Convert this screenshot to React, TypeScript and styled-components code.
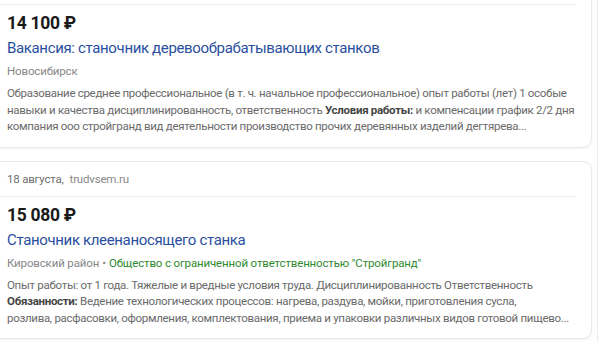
import styled, { createGlobalStyle } from 'styled-components';

const GlobalStyle = createGlobalStyle`
  html, body {
    margin: 0;
    padding: 0;
    background: #fff;
    overflow: hidden;
  }
  body {
    font-family: Roboto, "Liberation Sans", Arial, sans-serif;
  }
`;

const Page = styled.div`
  width: 600px;
  height: 342px;
  overflow: hidden;
  display: flex;
`;

const List = styled.div`
  width: 602px;
  flex-shrink: 0;
  margin-left: -10px;
  margin-top: -31px;
  display: flex;
  flex-direction: column;
  gap: 13px;
`;

const NextColumnEdge = styled.div`
  flex-shrink: 0;
  width: 2px;
  margin-left: 5px;
  border-left: 1px solid #ececec;
`;

const Card = styled.div`
  border: 1px solid #e9e9e9;
  border-radius: 9px;
  box-shadow: 0 1px 3px rgba(0, 0, 0, 0.05);
  padding: 0 16px 12px 16px;
  background: #fff;
`;

const Header = styled.div`
  height: 34px;
  display: flex;
  align-items: center;
  font-size: 11.5px;
  letter-spacing: -0.2px;
  color: #6f6f6f;
  border-bottom: 1px solid #ececec;
  margin-left: -16px;
  padding-left: 16px;
`;

const Source = styled.span`
  margin-left: 6px;
  color: #888;
`;

const Price = styled.div`
  margin-top: 6px;
  font-size: 17.5px;
  font-weight: 700;
  letter-spacing: -0.3px;
  color: #1a1a1a;
  line-height: 24px;
`;

const Title = styled.div`
  font-size: 15px;
  letter-spacing: -0.35px;
  color: #2a4f9e;
  line-height: 20px;
  margin-top: 3px;
`;

const Meta = styled.div`
  font-size: 11.5px;
  letter-spacing: -0.15px;
  color: #888;
  line-height: 16px;
  margin-top: 5px;
  white-space: nowrap;
`;

const Company = styled.span`
  color: #2f8a2f;
`;

const Dot = styled.span`
  margin: 0 3px;
`;

const Description = styled.div`
  font-size: 11.5px;
  letter-spacing: -0.3px;
  color: #6a6a6a;
  line-height: 16.5px;
  margin-top: 6px;
  b {
    color: #444;
  }
`;

const Line = styled.div`
  white-space: nowrap;
`;

export default function App() {
  return (
    <>
      <GlobalStyle />
      <Page>
        <List>
          <Card>
            <Header />
            <Price>14 100 ₽</Price>
            <Title>Вакансия: станочник деревообрабатывающих станков</Title>
            <Meta>Новосибирск</Meta>
            <Description>
              <Line>Образование среднее профессиональное (в т. ч. начальное профессиональное) опыт работы (лет) 1 особые</Line>
              <Line>
                навыки и качества дисциплинированность, ответственность <b>Условия работы:</b> и компенсации график 2/2 дня
              </Line>
              <Line>компания ооо стройгранд вид деятельности производство прочих деревянных изделий дегтярева...</Line>
            </Description>
          </Card>
          <Card>
            <Header>
              18 августа,<Source>trudvsem.ru</Source>
            </Header>
            <Price>15 080 ₽</Price>
            <Title>Станочник клеенаносящего станка</Title>
            <Meta>
              Кировский район<Dot>•</Dot>
              <Company>Общество с ограниченной ответственностью "Стройгранд"</Company>
            </Meta>
            <Description>
              <Line>Опыт работы: от 1 года. Тяжелые и вредные условия труда. Дисциплинированность Ответственность</Line>
              <Line>
                <b>Обязанности:</b> Ведение технологических процессов: нагрева, раздува, мойки, приготовления сусла,
              </Line>
              <Line>
                розлива, расфасовки, оформления, комплектования, приема и упаковки различных видов готовой пищево...
              </Line>
            </Description>
          </Card>
        </List>
        <NextColumnEdge />
      </Page>
    </>
  );
}
